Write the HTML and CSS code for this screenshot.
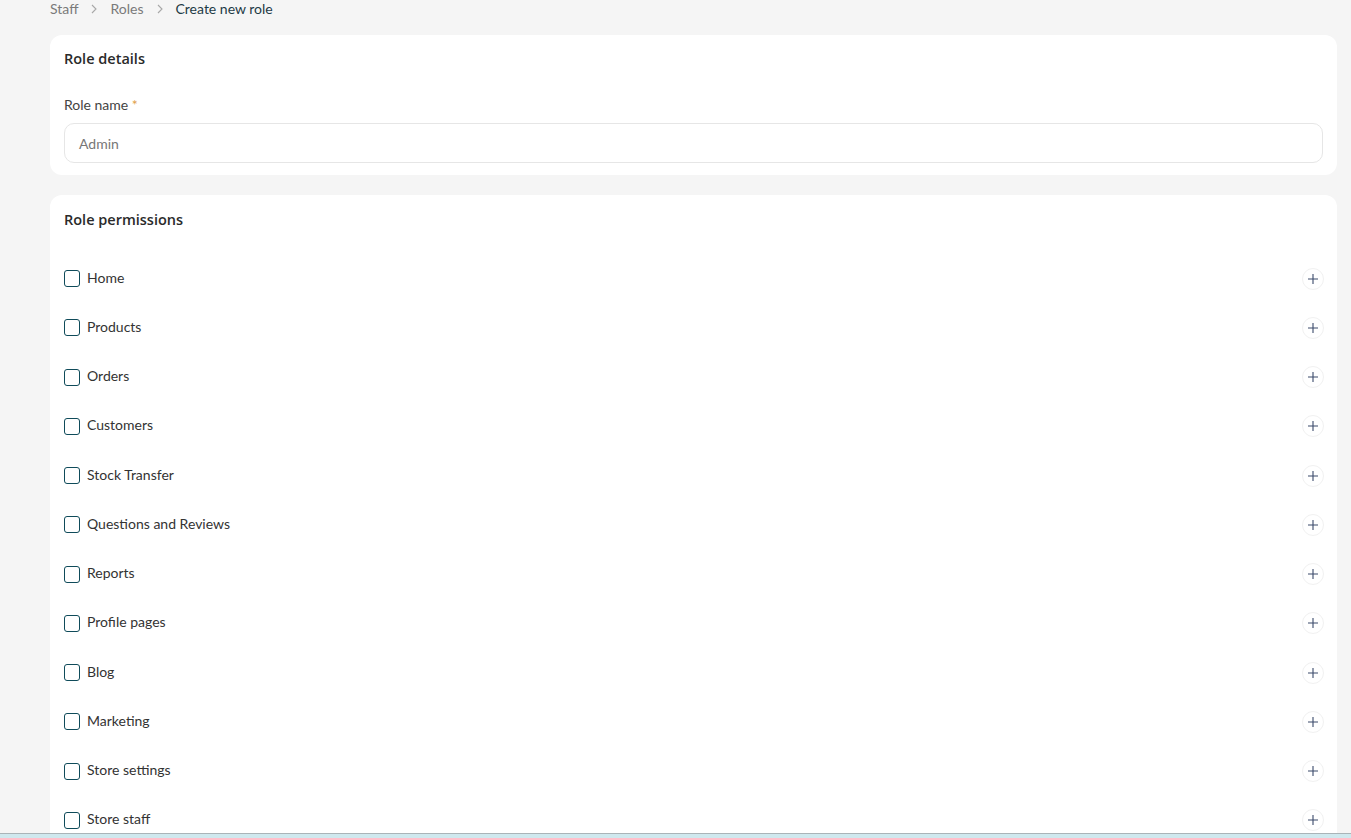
FILE: index.html
```html
<!DOCTYPE html>
<html>
<head>
<meta charset="utf-8">
<link rel="stylesheet" href="styles.css">
</head>
<body>
<div class="page">
  <nav class="crumbs">
    <span class="crumb">Staff</span>
    <span class="sep"><svg viewBox="0 0 8 10" width="8" height="10"><path d="M2 1l4 4-4 4" fill="none" stroke="#a8a8a8" stroke-width="1.1"/></svg></span>
    <span class="crumb">Roles</span>
    <span class="sep"><svg viewBox="0 0 8 10" width="8" height="10"><path d="M2 1l4 4-4 4" fill="none" stroke="#a8a8a8" stroke-width="1.1"/></svg></span>
    <span class="crumb current">Create new role</span>
  </nav>

  <section class="card details">
    <h2 class="card-title">Role details</h2>
    <label class="field-label">Role name <span class="req">*</span></label>
    <div class="input">Admin</div>
  </section>

  <section class="card perms">
    <h2 class="card-title">Role permissions</h2>
    <ul class="perm-list">
      <li class="perm"><span class="box"></span><span class="perm-name">Home</span><span class="plus"><svg viewBox="0 0 12 12" width="12" height="12"><path d="M6 1v10M1 6h10" stroke="#3b4a6b" stroke-width="1.1"/></svg></span></li>
      <li class="perm"><span class="box"></span><span class="perm-name">Products</span><span class="plus"><svg viewBox="0 0 12 12" width="12" height="12"><path d="M6 1v10M1 6h10" stroke="#3b4a6b" stroke-width="1.1"/></svg></span></li>
      <li class="perm"><span class="box"></span><span class="perm-name">Orders</span><span class="plus"><svg viewBox="0 0 12 12" width="12" height="12"><path d="M6 1v10M1 6h10" stroke="#3b4a6b" stroke-width="1.1"/></svg></span></li>
      <li class="perm"><span class="box"></span><span class="perm-name">Customers</span><span class="plus"><svg viewBox="0 0 12 12" width="12" height="12"><path d="M6 1v10M1 6h10" stroke="#3b4a6b" stroke-width="1.1"/></svg></span></li>
      <li class="perm"><span class="box"></span><span class="perm-name">Stock Transfer</span><span class="plus"><svg viewBox="0 0 12 12" width="12" height="12"><path d="M6 1v10M1 6h10" stroke="#3b4a6b" stroke-width="1.1"/></svg></span></li>
      <li class="perm"><span class="box"></span><span class="perm-name">Questions and Reviews</span><span class="plus"><svg viewBox="0 0 12 12" width="12" height="12"><path d="M6 1v10M1 6h10" stroke="#3b4a6b" stroke-width="1.1"/></svg></span></li>
      <li class="perm"><span class="box"></span><span class="perm-name">Reports</span><span class="plus"><svg viewBox="0 0 12 12" width="12" height="12"><path d="M6 1v10M1 6h10" stroke="#3b4a6b" stroke-width="1.1"/></svg></span></li>
      <li class="perm"><span class="box"></span><span class="perm-name">Profile pages</span><span class="plus"><svg viewBox="0 0 12 12" width="12" height="12"><path d="M6 1v10M1 6h10" stroke="#3b4a6b" stroke-width="1.1"/></svg></span></li>
      <li class="perm"><span class="box"></span><span class="perm-name">Blog</span><span class="plus"><svg viewBox="0 0 12 12" width="12" height="12"><path d="M6 1v10M1 6h10" stroke="#3b4a6b" stroke-width="1.1"/></svg></span></li>
      <li class="perm"><span class="box"></span><span class="perm-name">Marketing</span><span class="plus"><svg viewBox="0 0 12 12" width="12" height="12"><path d="M6 1v10M1 6h10" stroke="#3b4a6b" stroke-width="1.1"/></svg></span></li>
      <li class="perm"><span class="box"></span><span class="perm-name">Store settings</span><span class="plus"><svg viewBox="0 0 12 12" width="12" height="12"><path d="M6 1v10M1 6h10" stroke="#3b4a6b" stroke-width="1.1"/></svg></span></li>
      <li class="perm"><span class="box"></span><span class="perm-name">Store staff</span><span class="plus"><svg viewBox="0 0 12 12" width="12" height="12"><path d="M6 1v10M1 6h10" stroke="#3b4a6b" stroke-width="1.1"/></svg></span></li>
    </ul>
  </section>
</div>
<div class="bottom-bar"></div>
</body>
</html>
```

FILE: styles.css
```css
html, body {
  margin: 0;
  padding: 0;
  background: #f5f5f5;
  height: 838px;
  overflow: hidden;
}
body {
  font-family: "Lato", "Noto Sans", sans-serif;
  color: #333;
}
.page {
  padding: 0 14px 0 50px;
  display: flex;
  flex-direction: column;
  gap: 20px;
}
.crumbs {
  display: flex;
  align-items: center;
  gap: 12px;
  height: 17px;
  margin-top: 0;
  margin-bottom: -2px;
  font-size: 14px;
  line-height: 17px;
}
.crumb { color: #7a7a7a; }
.crumb.current { color: #1e3b46; }
.sep { display: flex; align-items: center; }
.card {
  background: #fff;
  border-radius: 12px;
  padding: 15px 14px 14px;
}
.card-title {
  margin: 0;
  font-family: "Open Sans", sans-serif;
  font-weight: 600;
  font-size: 14.5px;
  line-height: 18px;
  color: #2a2a2a;
}
.details { height: 111px; }
.field-label {
  display: block;
  margin-top: 28px;
  font-size: 14px;
  line-height: 17px;
  color: #444;
}
.req { color: #e0a04a; }
.input {
  margin-top: 10px;
  height: 38px;
  border: 1px solid #e6e6e6;
  border-radius: 10px;
  padding: 0 14px;
  display: flex;
  align-items: center;
  font-size: 14px;
  color: #777;
}
.perms { padding-top: 16px; padding-bottom: 40px; }
.perm-list {
  list-style: none;
  margin: 37px 0 0;
  padding: 0;
  display: flex;
  flex-direction: column;
  gap: 27.27px;
}
.perm {
  display: flex;
  align-items: center;
  height: 22px;
}
.box {
  width: 14px;
  height: 15px;
  border: 1.5px solid #0f4b5a;
  border-radius: 3px;
  margin-top: 3px;
}
.perm-name {
  margin-left: 7px;
  font-size: 14px;
  color: #333;
  flex: 1;
}
.plus {
  width: 20px;
  height: 20px;
  border: 1px solid #f1f1f1;
  border-radius: 50%;
  display: flex;
  align-items: center;
  justify-content: center;
  margin-top: 3px;
  margin-right: -1px;
}
.bottom-bar {
  position: fixed;
  left: 0;
  right: 0;
  bottom: 0;
  height: 4px;
  background: #cfe8ee;
  border-top: 1px solid #a9b4b8;
}
```
